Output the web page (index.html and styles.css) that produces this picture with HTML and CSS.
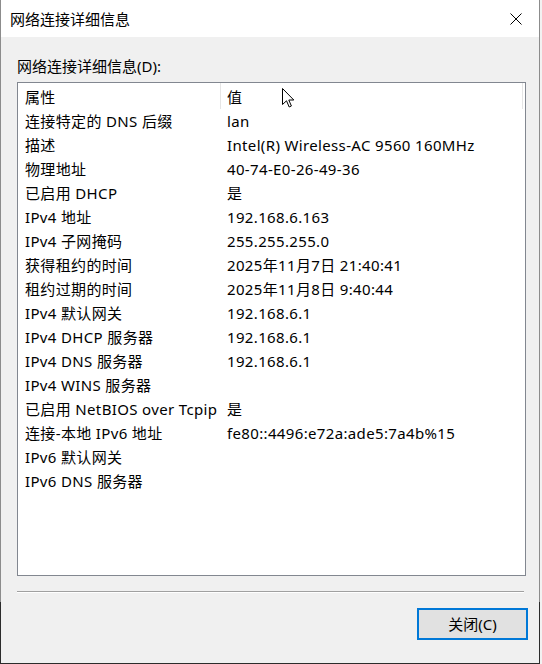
FILE: index.html
```html
<!DOCTYPE html>
<html lang="zh-CN">
<head>
<meta charset="utf-8">
<title>网络连接详细信息</title>
<link rel="stylesheet" href="styles.css">
</head>
<body>
<div class="frame">
  <div class="window">
    <div class="titlebar">
      <span class="title">网络连接详细信息</span>
      <button class="close" aria-label="关闭">
        <svg width="12" height="12" viewBox="0 0 12 12"><path d="M0.5 0.5 L11.5 11.5 M11.5 0.5 L0.5 11.5" stroke="#000" stroke-width="1" fill="none"/></svg>
      </button>
    </div>
    <div class="content">
      <div class="label">网络连接详细信息(D):</div>
      <div class="listbox">
        <div class="header">
          <div class="hcell c1">属性</div>
          <div class="hcell c2">值</div>
        </div>
        <div class="rows">
          <div class="row"><span class="c1">连接特定的 DNS 后缀</span><span class="c2">lan</span></div>
          <div class="row"><span class="c1">描述</span><span class="c2">Intel(R) Wireless-AC 9560 160MHz</span></div>
          <div class="row"><span class="c1">物理地址</span><span class="c2">40-74-E0-26-49-36</span></div>
          <div class="row"><span class="c1">已启用 DHCP</span><span class="c2">是</span></div>
          <div class="row"><span class="c1">IPv4 地址</span><span class="c2">192.168.6.163</span></div>
          <div class="row"><span class="c1">IPv4 子网掩码</span><span class="c2">255.255.255.0</span></div>
          <div class="row"><span class="c1">获得租约的时间</span><span class="c2">2025年11月7日 21:40:41</span></div>
          <div class="row"><span class="c1">租约过期的时间</span><span class="c2">2025年11月8日 9:40:44</span></div>
          <div class="row"><span class="c1">IPv4 默认网关</span><span class="c2">192.168.6.1</span></div>
          <div class="row"><span class="c1">IPv4 DHCP 服务器</span><span class="c2">192.168.6.1</span></div>
          <div class="row"><span class="c1">IPv4 DNS 服务器</span><span class="c2">192.168.6.1</span></div>
          <div class="row"><span class="c1">IPv4 WINS 服务器</span><span class="c2"></span></div>
          <div class="row"><span class="c1 wide">已启用 NetBIOS over Tcpip</span><span class="c2">是</span></div>
          <div class="row"><span class="c1">连接-本地 IPv6 地址</span><span class="c2">fe80::4496:e72a:ade5:7a4b%15</span></div>
          <div class="row"><span class="c1">IPv6 默认网关</span><span class="c2"></span></div>
          <div class="row"><span class="c1">IPv6 DNS 服务器</span><span class="c2"></span></div>
        </div>
      </div>
      <div class="separator"></div>
      <div class="actions">
        <button class="btn">关闭(C)</button>
      </div>
    </div>
  </div>
  <svg class="cursor" width="13" height="21" viewBox="0 0 13 21">
    <path d="M0.5 0.5 L0.5 16.5 L4.5 12.8 L7.2 19 L9.4 18 L6.8 12 L11.8 12 Z" fill="#fff" stroke="#000" stroke-width="1" stroke-linejoin="miter"/>
  </svg>
</div>
</body>
</html>
```

FILE: styles.css
```css
* { box-sizing: border-box; }
html, body {
  margin: 0;
  padding: 0;
  width: 542px;
  height: 664px;
  overflow: hidden;
  background: #f2f2f2;
  font-family: "Noto Sans", "Noto Sans CJK SC", sans-serif;
  font-size: 15px;
  color: #000;
}
.frame {
  position: relative;
  width: 540px;
  height: 664px;
  padding: 0 1px 1px 1px;
  background: linear-gradient(to bottom, #8c8c8c 0, #8c8c8c 602px, #2b2b2b 602px);
}
.window {
  width: 538px;
  height: 663px;
  background: #f0f0f0;
  display: flex;
  flex-direction: column;
}
.titlebar {
  height: 37px;
  background: #fff;
  display: flex;
  align-items: center;
  justify-content: space-between;
  padding-left: 9px;
}
.title {
  font-size: 15px;
  line-height: 20px;
}
.close {
  border: 0;
  background: transparent;
  width: 46px;
  height: 37px;
  padding: 0;
  display: flex;
  align-items: center;
  justify-content: center;
}
.content {
  flex: 1;
  padding: 0 12px 0 16px;
  display: flex;
  flex-direction: column;
}
.label {
  margin-top: 19px;
  height: 20px;
  line-height: 20px;
}
.listbox {
  margin-top: 6px;
  width: 509px;
  height: 494px;
  background: #fff;
  border: 1px solid #828790;
  display: flex;
  flex-direction: column;
  letter-spacing: 0.35px;
}
.header {
  height: 26px;
  display: flex;
  align-items: stretch;
}
.hcell {
  display: flex;
  align-items: center;
  padding-top: 2px;
  line-height: 20px;
}
.header .c1 {
  width: 203px;
  padding-left: 7px;
  border-right: 1px solid #e5e5e5;
}
.header .c2 {
  width: 302px;
  padding-left: 6px;
  border-right: 1px solid #e5e5e5;
}
.rows {
  display: flex;
  flex-direction: column;
}
.row {
  height: 24px;
  line-height: 20px;
  display: flex;
  align-items: center;
  white-space: nowrap;
}
.row .c1 {
  width: 203px;
  padding-left: 7px;
}
.row .c2 {
  padding-left: 6px;
}
.separator {
  margin-top: 15px;
  width: 507px;
  height: 2px;
  border-top: 1px solid #a0a0a0;
  border-bottom: 1px solid #ffffff;
}
.actions {
  display: flex;
  justify-content: flex-end;
  margin-top: 15px;
}
.btn {
  width: 111px;
  height: 32px;
  border: 2px solid #0078d7;
  background: #e1e1e1;
  font-family: "Noto Sans", "Noto Sans CJK SC", sans-serif;
  font-size: 15px;
  line-height: 20px;
  color: #000;
  padding: 0;
  margin-right: -1px;
}
.cursor {
  position: absolute;
  left: 282px;
  top: 88px;
}
```
